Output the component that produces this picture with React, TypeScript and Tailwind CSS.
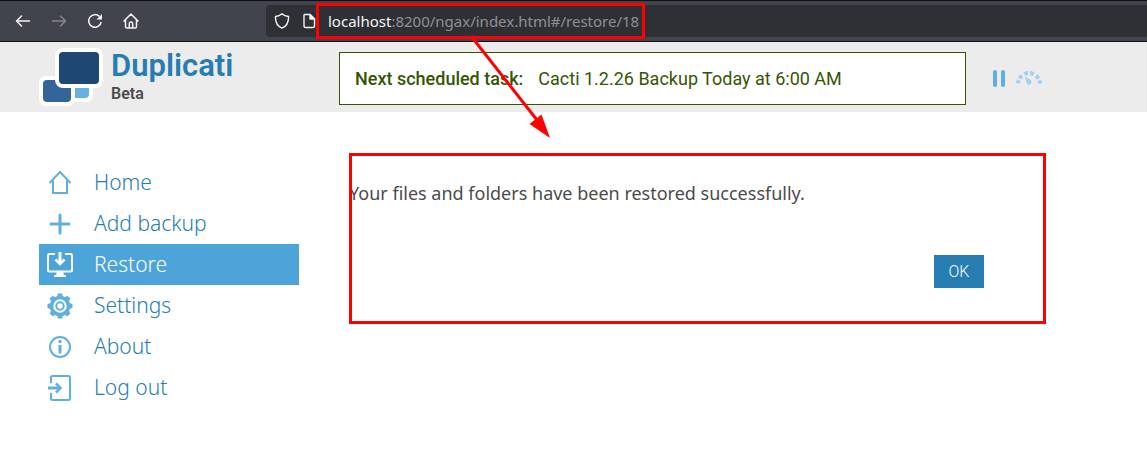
import type { ReactNode } from 'react';

type NavItem = { label: string; icon: ReactNode; active?: boolean };

const HomeIcon = () => (
  <svg width="28" height="28" viewBox="0 0 28 28" fill="none" stroke="currentColor" strokeWidth="2">
    <path d="M3.500 14 14 3l10.500 11M7 11.500V24h14V11.500" />
  </svg>
);

const PlusIcon = () => (
  <svg width="28" height="28" viewBox="0 0 28 28" fill="none" stroke="currentColor" strokeWidth="3" strokeLinecap="round">
    <path d="M14 5v18M5 14h18" />
  </svg>
);

const RestoreIcon = () => (
  <svg width="28" height="28" viewBox="0 0 28 28" fill="none" stroke="currentColor" strokeWidth="2">
    <path d="M9 3H3.500Q2 3 2 4.500V19q0 1.500 1.500 1.500h21Q26 20.500 26 19V4.500Q26 3 24.500 3H19" />
    <path d="M14 1v11" strokeWidth="3" />
    <path d="m9.500 8.500 4.500 4.500 4.500-4.500" strokeWidth="2.500" />
    <path d="M10.500 21h7v2.500l2.500 1V26H8v-1.500l2.500-1z" fill="currentColor" stroke="none" />
  </svg>
);

const GearIcon = () => (
  <svg width="28" height="28" viewBox="0 0 28 28" fill="currentColor">
    {[0, 45, 90, 135].map((angle) => (
      <path key={angle} d="M11 4.500 12 1.500h4l1 3v19l-1 3h-4l-1-3z" transform={`rotate(${angle} 14 14)`} />
    ))}
    <circle cx="14" cy="14" r="10.300" />
    <circle cx="14" cy="14" r="5.700" fill="none" stroke="white" strokeWidth="2" />
    <circle cx="14" cy="14" r="2.700" fill="white" />
  </svg>
);

const InfoIcon = () => (
  <svg width="28" height="28" viewBox="0 0 28 28" fill="none" stroke="currentColor">
    <circle cx="14" cy="14" r="10" strokeWidth="2" />
    <circle cx="14" cy="8.500" r="1.700" fill="currentColor" stroke="none" />
    <path d="M14 12v8.500" strokeWidth="3" />
  </svg>
);

const LogoutIcon = () => (
  <svg width="28" height="28" viewBox="0 0 28 28" fill="none" stroke="currentColor" strokeWidth="2">
    <path d="M5 9V3.500Q5 2 6.500 2h16Q24 2 24 3.500v21q0 1.500-1.500 1.500h-16Q5 26 5 24.500V19" />
    <path d="M2 14h11" strokeWidth="3" />
    <path d="m10 9.500 4.500 4.500-4.500 4.500" strokeWidth="2.500" />
  </svg>
);

const navItems: NavItem[] = [
  { label: 'Home', icon: <HomeIcon /> },
  { label: 'Add backup', icon: <PlusIcon /> },
  { label: 'Restore', icon: <RestoreIcon />, active: true },
  { label: 'Settings', icon: <GearIcon /> },
  { label: 'About', icon: <InfoIcon /> },
  { label: 'Log out', icon: <LogoutIcon /> },
];

const Logo = () => (
  <svg width="64" height="60" viewBox="0 0 64 60" aria-hidden="true">
    <rect x="28" y="28" width="26" height="26" rx="7" fill="white" />
    <path d="M36 39h14v7q0 4-4 4H36z" fill="#67b1de" />
    <rect x="0" y="28" width="36" height="30" rx="7" fill="white" />
    <rect x="4" y="32" width="28" height="22" rx="4" fill="#33659a" />
    <rect x="16" y="0" width="48" height="40" rx="8" fill="white" />
    <rect x="20" y="4" width="40" height="32" rx="4" fill="#1f4774" />
  </svg>
);

const GaugeIcon = () => (
  <svg width="28" height="16" viewBox="0 0 28 16" fill="#a3d0ec" aria-hidden="true">
    <path d="M1 13.500q.1-2.300.9-4l3.600 1.500q-.5 1.200-.5 2.500zM2.900 7.500q1.100-1.900 2.800-3.200l2.500 3q-1.100.9-1.900 2.200zM8.500 2.500Q10.500 1.300 13 1v4.200q-1.500.2-2.700.9zM15 1q2.500.3 4.500 1.500l-1.800 3.600q-1.200-.7-2.700-.9zM22.300 4.300Q24 5.600 25.100 7.500l-3.400 2q-.8-1.300-1.900-2.200zM26.100 9.500q.8 1.700.9 4h-4q0-1.300-.5-2.500z" />
    <path d="m10 6.800 4.800 2.400q2.400 1.500 1.500 3.900-.9 2.100-3 1.600-1.400-.4-1.800-2.100z" />
  </svg>
);

const BrowserBar = () => (
  <div className="flex h-[42px] items-center border-y border-[#0e0f14] bg-[#42444d] text-[#f4f4f6]">
    <div className="flex w-[266px] shrink-0 items-center gap-4 pl-[13px]">
      <button aria-label="Back" className="flex size-5 items-center justify-center">
        <svg width="16" height="16" viewBox="0 0 16 16" fill="none" stroke="currentColor" strokeWidth="1.500" strokeLinecap="round" strokeLinejoin="round"><path d="M14.500 8H1.500M6.500 3l-5 5 5 5" /></svg>
      </button>
      <button aria-label="Forward" className="flex size-5 items-center justify-center text-[#85868c]">
        <svg width="16" height="16" viewBox="0 0 16 16" fill="none" stroke="currentColor" strokeWidth="1.500" strokeLinecap="round" strokeLinejoin="round"><path d="M1.500 8h13M9.500 3l5 5-5 5" /></svg>
      </button>
      <button aria-label="Reload" className="flex size-5 items-center justify-center">
        <svg width="16" height="16" viewBox="0 0 16 16" fill="none" stroke="currentColor" strokeWidth="1.500"><path d="M14.200 9A6.300 6.300 0 1 1 12.500 3.500" /><path d="M15 1v5.500H9.500z" fill="currentColor" stroke="none" /></svg>
      </button>
      <button aria-label="Home page" className="flex size-5 items-center justify-center">
        <svg width="16" height="16" viewBox="0 0 16 16" fill="none" stroke="currentColor" strokeWidth="1.500" strokeLinejoin="round" strokeLinecap="round"><path d="M1 8l7-7 7 7M2.500 7v6.500q0 1.500 1.500 1.500h8q1.500 0 1.500-1.500V7M6.300 15V10.500Q6.300 9 8 9t1.700 1.500V15" /></svg>
      </button>
    </div>
    <div className="flex h-8 flex-1 items-center rounded-l bg-[#2f3036]">
      <svg className="ml-2 shrink-0" width="16" height="16" viewBox="0 0 16 16" fill="none" stroke="currentColor" strokeWidth="1.400" strokeLinejoin="round"><path d="M8 .8Q10.500 3 14.500 3.500 15 12 8 15.200 1 12 1.500 3.500 5.500 3 8 .8z" /></svg>
      <svg className="ml-3 shrink-0" width="14" height="16" viewBox="0 0 14 16" fill="none" stroke="currentColor" strokeWidth="1.400" strokeLinejoin="round"><path d="M2.500 1.500H8l4.500 4.500v7q0 1.500-1.500 1.500H3.500Q2 14.500 2 13V2z" /><path d="M8 1.500V6h4.500z" fill="currentColor" /></svg>
      <div className="relative ml-3">
        <span className="font-['Noto_Sans',sans-serif] text-[15px] text-[#8f9095]">
          <span className="text-[#f4f4f6]">localhost</span>:8200/ngax/index.html#/restore/18
        </span>
        <div className="pointer-events-none absolute -inset-y-1.5 -right-1.5 -left-3 border-3 border-[#ff0000]" />
      </div>
    </div>
  </div>
);

export default function App() {
  return (
    <div className="relative min-h-screen bg-white font-['Noto_Sans',sans-serif] text-[#4b4b4b]">
      <BrowserBar />

      <header className="flex h-[70px] items-center bg-[#ececec] pt-0.5 pl-[39px]">
        <div className="flex w-[300px] shrink-0 items-center gap-2">
          <Logo />
          <div className="flex flex-col">
            <h1 className="font-['Roboto',sans-serif] text-[31px] leading-8 font-semibold text-[#277db2]">Duplicati</h1>
            <span className="font-['Roboto',sans-serif] text-[16px] leading-6 font-semibold">Beta</span>
          </div>
        </div>
        <div className="flex h-[53px] max-w-[627px] flex-1 items-center gap-[15px] border border-[#365504] bg-white px-[15px] font-['Roboto',sans-serif] text-[18px] whitespace-nowrap text-[#365504]">
          <span className="font-medium">Next scheduled task:</span>
          <span>Cacti 1.2.26 Backup Today at 6:00 AM</span>
        </div>
        <div className="ml-[25px] flex items-center gap-2">
          <button aria-label="Pause" className="flex size-4 items-center justify-center gap-1">
            <span className="h-[17px] w-1 rounded-full bg-[#60b0df]" />
            <span className="h-[17px] w-1 rounded-full bg-[#60b0df]" />
          </button>
          <button aria-label="Throttle"><GaugeIcon /></button>
        </div>
      </header>

      <div className="flex pt-[50px] pl-[39px]">
        <nav className="w-[260px] shrink-0">
          <ul>
            {navItems.map(({ label, icon, active }) => (
              <li key={label}>
                <a
                  href={`#${label}`}
                  className={`flex h-[41px] items-center gap-5 pl-[7px] text-[21px] ${active ? 'bg-[#4ca4d9] text-white' : 'text-[#277db2]'}`}
                >
                  <span className={active ? 'text-white' : 'text-[#60b0df]'}>{icon}</span>
                  <span className="font-light">{label}</span>
                </a>
              </li>
            ))}
          </ul>
        </nav>
        <main className="relative -mt-[9px] mr-6 ml-[50px] h-[171px] max-w-[697px] flex-1 self-start">
          <div className="flex flex-col pt-7 pr-[62px]">
            <p className="text-[18px] leading-6">Your files and folders have been restored successfully.</p>
            <button className="mt-[50px] h-[33px] w-[50px] self-end bg-[#277db2] font-['Roboto',sans-serif] text-[16px] font-light text-white">OK</button>
          </div>
          <div className="pointer-events-none absolute inset-0 border-3 border-[#ff0000]" />
        </main>
      </div>

      <svg className="pointer-events-none absolute top-[34px] left-[468px]" width="84" height="106" viewBox="0 0 84 106" aria-hidden="true">
        <path d="M3 2 69 86" stroke="#ff0000" strokeWidth="3" />
        <path d="M82 104 61.500 90 73.500 80.500z" fill="#ff0000" />
      </svg>
    </div>
  );
}
